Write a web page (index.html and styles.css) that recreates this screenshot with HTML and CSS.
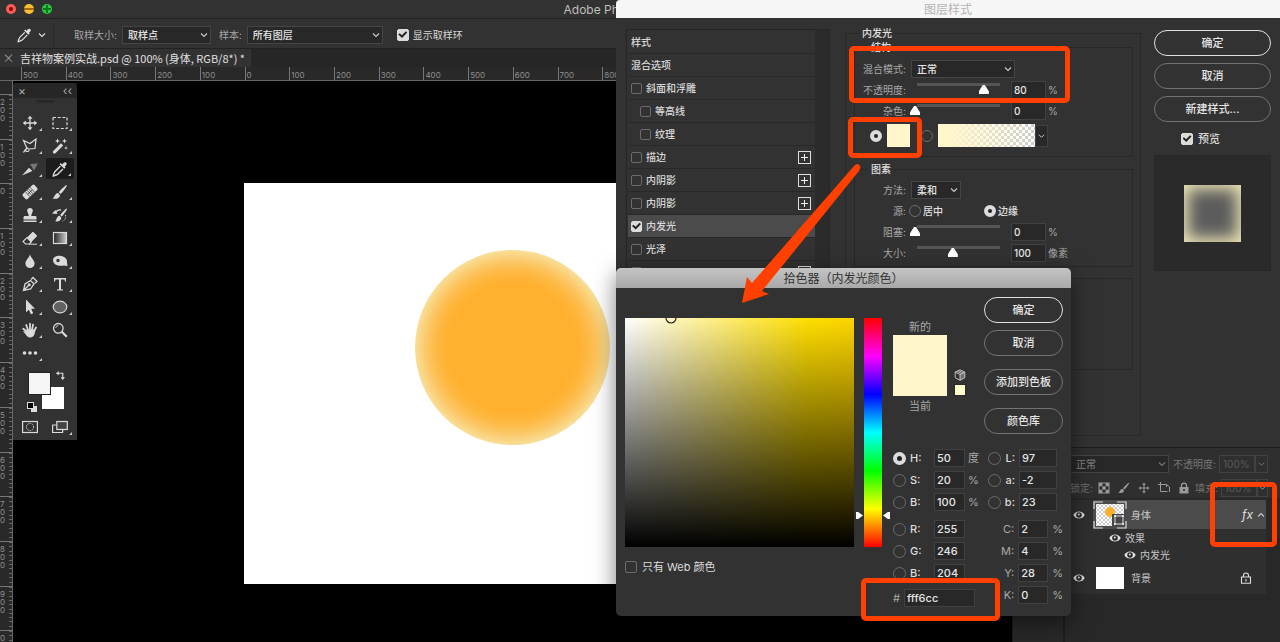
FILE: index.html
```html
<!DOCTYPE html>
<html lang="zh-CN">
<head>
<meta charset="utf-8">
<title>Adobe Photoshop CC 2019</title>
<link rel="stylesheet" href="styles.css">
</head>
<body>
<svg class="defs" aria-hidden="true">
  <symbol id="chev" viewBox="0 0 8 8"><path d="M1 2.500l3 3 3-3" fill="none" stroke="currentColor" stroke-width="1.100"/></symbol>
  <symbol id="dropper" viewBox="0 0 16 16"><path d="M10.2 3.600c1-1.600 2.400-3 3.800-2 1.500 1.200.4 2.800-1.200 4l.8.9-1.300 1.300-4.800-4.600L8.800 2z" fill="currentColor"/><path d="M8.300 5.200L3 10.500c-.8.8-.6 1.600-1.500 3L1.300 15l1.400-.3c1.400-.9 2.100-.6 3-1.500L11 7.900" fill="none" stroke="currentColor" stroke-width="1.400"/></symbol>
  <symbol id="move" viewBox="0 0 16 16"><path d="M8 3v10M3 8h10" stroke="currentColor" stroke-width="1.300"/><path d="M8 .8l2.500 3h-5zM8 15.200l2.500-3h-5zM.8 8l3-2.500v5zM15.200 8l-3-2.500v5z" fill="currentColor"/></symbol>
  <symbol id="marquee" viewBox="0 0 16 16"><rect x="1" y="2.500" width="14" height="11" fill="none" stroke="currentColor" stroke-width="1.200" stroke-dasharray="3 1.700"/></symbol>
  <symbol id="lasso" viewBox="0 0 16 16"><path d="M5 10.500L1.500 2.500l6.500 3 6-4.500-1 9.500-6.500.5M5 10.500a1.800 1.500 0 1 0 2 1.300M5 10.500c-2 1-2.500 2-3.500 4M6.500 11l-2-1.500" fill="none" stroke="currentColor" stroke-width="1.200"/></symbol>
  <symbol id="wand" viewBox="0 0 16 16"><path d="M1 13.300L9 5.300l2.200 2.200-8 8c-1.500.5-2.700-.7-2.200-2.200z" fill="currentColor"/><path d="M5.500.5l.7 1.800 1.800.7-1.800.7-.7 1.800-.7-1.800L3 3l1.800-.7zM12.500.5l.6 1.800 1.900.7-1.900.7-.6 1.800-.7-1.800-1.800-.7 1.800-.7zM14 8l.5 1.500 1.500.5-1.500.5L14 12l-.5-1.500L12 10l1.500-.5z" fill="currentColor"/></symbol>
  <symbol id="slice" viewBox="0 0 16 16"><path d="M8 3l8-.5-4 7z" fill="#777"/><path d="M0 14.500L7 6.800l3.400 3.200z" fill="currentColor"/></symbol>
  <symbol id="heal" viewBox="0 0 16 16"><g transform="rotate(-43 8 8)"><rect x="0" y="4.500" width="16" height="7" rx="1.800" fill="currentColor"/><path d="M4.800 4.500v7M11.200 4.500v7M7 4.500v7M9 4.500v7M4.800 8h6.400" stroke="#333" stroke-width=".7"/></g></symbol>
  <symbol id="brush" viewBox="0 0 16 16"><path d="M14.800 1c.8.7-3.500 6.500-6.300 9L6.700 8.300C9 5.500 14 .4 14.800 1zM6 9l1.900 1.900c.4 3-3.500 4.600-7.400 3.600C2.600 13.600 2.700 9.300 6 9z" fill="currentColor"/></symbol>
  <symbol id="stamp" viewBox="0 0 16 16"><path d="M6.700 9C6.800 6.500 5.200 5.500 5.200 3.700a2.800 2.700 0 0 1 5.600 0c0 1.800-1.600 2.800-1.500 5.300H13c1 0 1.500.6 1.500 1.500v2h-13v-2C1.500 9.600 2 9 3 9zM1.500 13.500h13V15h-13z" fill="currentColor"/></symbol>
  <symbol id="history" viewBox="0 0 16 16"><path d="M14.800 1.500c.8.7-2.500 5.500-5 8L8.200 8c2-2.500 5.900-7.100 6.600-6.500zM7.600 8.700l1.600 1.700c.4 2.800-3 4.500-6.200 3.900 1.800-1.300 1.700-5.300 4.600-5.600z" fill="currentColor"/><path d="M3 6c2-3 4-3.500 6-3" fill="none" stroke="currentColor" stroke-width="1.400"/><path d="M0 6.500L3.500 3 5.500 7z" fill="currentColor"/><path d="M13.500 8c.5 3-.5 5-3 6.500" fill="none" stroke="currentColor" stroke-dasharray="1.200 1.200"/></symbol>
  <symbol id="eraser" viewBox="0 0 16 16"><path d="M5 7.500L10 2.500c.6-.6 1.200-.6 1.800 0L14.500 5c.6.6.6 1.200 0 1.800L9.300 12z" fill="currentColor"/><path d="M5 7.500l4.300 4.500-2 2H3.600L1 11.500z" fill="none" stroke="currentColor" stroke-width="1.100"/><path d="M7 14.200h8" stroke="currentColor"/></symbol>
  <symbol id="gradient" viewBox="0 0 16 16"><defs><linearGradient id="lg"><stop stop-color="#222"/><stop offset="1" stop-color="#ccc"/></linearGradient></defs><rect x="1.500" y="2.500" width="13" height="11" fill="url(#lg)" stroke="currentColor" stroke-width="1.200"/></symbol>
  <symbol id="drop" viewBox="0 0 16 16"><path d="M8 1.500c1 3.500 4.600 5.800 4.600 9a4.600 4.500 0 0 1-9.200 0c0-3.200 3.600-5.500 4.600-9z" fill="currentColor"/></symbol>
  <symbol id="dodge" viewBox="0 0 16 16"><path d="M1 7c.5-4 6.500-5 10-3.500C14 4.500 15.500 7 15 10l.5 3-4-.5C7 13.500 1 12 1 7z" fill="currentColor"/><circle cx="6" cy="7.500" r="1.700" fill="#333"/></symbol>
  <symbol id="pen" viewBox="0 0 16 16"><path d="M1.500 14.500L3 8l5.500-3.500 3.500 3.300L8.600 13zM9 3.500L11 1.500l4 4L12.800 7.300M1.500 14.500L6.500 9.500" fill="none" stroke="currentColor" stroke-width="1.300"/><circle cx="7.200" cy="8.800" r="1.500" fill="currentColor"/></symbol>
  <symbol id="type" viewBox="0 0 16 16"><path d="M2 2h12v3.500h-1l-.5-2H9v9.700l2 .3v1H5v-1l2-.3V3.500H3.500l-.5 2H2z" fill="currentColor"/></symbol>
  <symbol id="select" viewBox="0 0 16 16"><path d="M4 .5l9 9.300H9.200l2 4.500-2.300 1-2-4.600L4 13.300z" fill="currentColor"/></symbol>
  <symbol id="ellipse" viewBox="0 0 16 16"><ellipse cx="8" cy="8" rx="6.800" ry="5.800" fill="#626262" stroke="currentColor" stroke-width="1.200"/></symbol>
  <symbol id="hand" viewBox="0 0 16 16"><path d="M4.800 9.500L1.300 6.700M6 8L4.200 3M8 7.500V1.700M10 8l1-5.300M12 9.300L14 5.500" stroke="currentColor" stroke-width="1.800" stroke-linecap="round"/><path d="M4.500 7.500h8.700c0 4-1.200 8-4.700 8S4.300 13 1 9l3 .5z" fill="currentColor"/></symbol>
  <symbol id="zoom" viewBox="0 0 16 16"><circle cx="6.300" cy="6.300" r="4.800" fill="none" stroke="currentColor" stroke-width="1.300"/><path d="M9.800 9.800l5 5" stroke="currentColor" stroke-width="2.200"/><path d="M3.700 6A2.700 2.700 0 0 1 6.300 3.600" fill="none" stroke="currentColor" stroke-width=".8"/></symbol>
  <symbol id="dots" viewBox="0 0 16 16"><circle cx="2.500" cy="8" r="1.800" fill="currentColor"/><circle cx="8" cy="8" r="1.800" fill="currentColor"/><circle cx="13.500" cy="8" r="1.800" fill="currentColor"/></symbol>
  <symbol id="mask" viewBox="0 0 16 16"><rect x=".6" y="2.500" width="14.800" height="11" fill="none" stroke="currentColor" stroke-width="1.200"/><circle cx="8" cy="8" r="3.600" fill="none" stroke="currentColor" stroke-dasharray="1.300 1"/></symbol>
  <symbol id="screen" viewBox="0 0 16 16"><path d="M4.500 6H.6v7.500h10V11" fill="none" stroke="currentColor" stroke-width="1.200"/><rect x="4.800" y="2.500" width="10.500" height="8" fill="#444" stroke="currentColor" stroke-width="1.200"/></symbol>
  <symbol id="swap" viewBox="0 0 10 10"><path d="M2 2.500h5.500V8" fill="none" stroke="currentColor" stroke-width="1.300"/><path d="M0 2.500L3 0v5zM7.500 10L5 7h5z" fill="currentColor"/></symbol>
  <symbol id="eye" viewBox="0 0 12 12"><path d="M.3 6C2.500 1.300 9.500 1.300 11.700 6 9.500 10.700 2.500 10.700.3 6z" fill="currentColor"/><circle cx="6" cy="6" r="2.800" fill="#2b2b2b"/><circle cx="5.800" cy="5.500" r="1" fill="currentColor"/></symbol>
  <symbol id="lockpx" viewBox="0 0 12 12"><rect x="1" y="1" width="10" height="10" fill="none" stroke="currentColor"/><path d="M1 1h3.300v3.300H1zM7.700 1H11v3.300H7.700zM4.300 4.300h3.400v3.400H4.300zM1 7.700h3.300V11H1zM7.700 7.700H11V11H7.700z" fill="currentColor"/></symbol>
  <symbol id="artb" viewBox="0 0 12 12"><path d="M0 2.500h8.500V5M2.500 0v9.500h7M8.500 2.500l3 2.500v5" fill="none" stroke="currentColor"/></symbol>
  <symbol id="lock" viewBox="0 0 12 12"><path d="M3.500 5.500V3.700a2.500 2.500 0 0 1 5 0v1.800" fill="none" stroke="currentColor" stroke-width="1.300"/><path d="M1.500 5h9v6.500h-9z" fill="currentColor"/><circle cx="6" cy="8" r="1" fill="#2b2b2b"/></symbol>
  <symbol id="lock2" viewBox="0 0 12 12"><path d="M3.500 5V3.500a2.500 2.500 0 0 1 5 0V5M1.500 5h9v6.300h-9zM6 7v2.500" fill="none" stroke="currentColor" stroke-width="1.100"/></symbol>
  <symbol id="cube" viewBox="0 0 12 12"><path d="M6 .8l4.800 2.300v5.600L6 11.300 1.200 8.700V3.100zM1.200 3.100L6 5.500l4.800-2.400M6 5.500v5.800M3 2.500l5 2.300M4.500 1.600l5 2.300" fill="none" stroke="currentColor" stroke-width=".9"/><path d="M6 5.500v5.800l4.800-2.600V3.100z" fill="currentColor" opacity=".4"/></symbol>
</svg>

<div class="desktop">
  <main class="app">
    <header class="titlebar">
      <span class="light red"></span><span class="light amber"></span><span class="light green"></span>
      <span class="app-name">Adobe Photoshop CC 2019</span>
    </header>
    <div class="options">
      <button class="current-tool" aria-label="吸管工具"><svg class="i16"><use href="#dropper"/></svg><svg class="i8"><use href="#chev"/></svg></button>
      <label for="size">取样大小:</label>
      <span class="pick pick-size"><select id="size"><option>取样点</option></select><svg class="i8"><use href="#chev"/></svg></span>
      <label for="sample">样本:</label>
      <span class="pick pick-sample"><select id="sample"><option>所有图层</option></select><svg class="i8"><use href="#chev"/></svg></span>
      <label class="ring"><input type="checkbox" checked>显示取样环</label>
    </div>
    <div class="tabs"><div class="tab"><button class="tab-close" aria-label="关闭">×</button><span>吉祥物案例实战.psd @ 100% (身体, RGB/8*) *</span></div></div>
    <div class="hruler"><div class="hscale"><span>500</span><span>400</span><span>300</span><span>200</span><span>100</span><span>0</span><span>100</span><span>200</span><span>300</span><span>400</span><span>500</span><span>600</span><span>700</span><span>800</span></div></div>
    <div class="work">
      <div class="vruler"><div class="vscale"><span>200</span><span>100</span><span>0</span><span>100</span><span>200</span><span>300</span><span>400</span><span>500</span><span>600</span><span>700</span><span>800</span><span>900</span><span>0</span></div></div>
      <div class="canvas"><div class="artboard"><div class="ball"></div></div></div>
      <div class="dock"></div>
    </div>
  </main>

  <aside class="tools">
    <div class="tools-head"><button aria-label="关闭">×</button><button aria-label="折叠">‹‹</button></div>
    <div class="grip"></div>
    <div class="tool-grid">
      <button aria-label="移动"><svg class="i16"><use href="#move"/></svg></button>
      <button aria-label="选框"><svg class="i16"><use href="#marquee"/></svg></button>
      <button aria-label="套索"><svg class="i16"><use href="#lasso"/></svg></button>
      <button aria-label="魔棒"><svg class="i16"><use href="#wand"/></svg></button>
      <button aria-label="切片"><svg class="i16"><use href="#slice"/></svg></button>
      <button aria-label="吸管" class="on"><svg class="i16"><use href="#dropper"/></svg></button>
      <button aria-label="修复"><svg class="i16"><use href="#heal"/></svg></button>
      <button aria-label="画笔"><svg class="i16"><use href="#brush"/></svg></button>
      <button aria-label="图章"><svg class="i16"><use href="#stamp"/></svg></button>
      <button aria-label="历史画笔"><svg class="i16"><use href="#history"/></svg></button>
      <button aria-label="橡皮擦"><svg class="i16"><use href="#eraser"/></svg></button>
      <button aria-label="渐变"><svg class="i16"><use href="#gradient"/></svg></button>
      <button aria-label="模糊"><svg class="i16"><use href="#drop"/></svg></button>
      <button aria-label="减淡"><svg class="i16"><use href="#dodge"/></svg></button>
      <button aria-label="钢笔"><svg class="i16"><use href="#pen"/></svg></button>
      <button aria-label="文字"><svg class="i16"><use href="#type"/></svg></button>
      <button aria-label="路径选择"><svg class="i16"><use href="#select"/></svg></button>
      <button aria-label="椭圆"><svg class="i16"><use href="#ellipse"/></svg></button>
      <button aria-label="抓手"><svg class="i16"><use href="#hand"/></svg></button>
      <button aria-label="缩放" class="plain"><svg class="i16"><use href="#zoom"/></svg></button>
      <button aria-label="更多"><svg class="i16"><use href="#dots"/></svg></button>
    </div>
    <div class="colors">
      <span class="back"></span><span class="fore"></span>
      <span class="mini-back"></span><span class="mini-fore"></span>
      <svg class="swap"><use href="#swap"/></svg>
    </div>
    <div class="tool-grid">
      <button aria-label="快速蒙版" class="plain"><svg class="i16"><use href="#mask"/></svg></button>
      <button aria-label="屏幕模式"><svg class="i16"><use href="#screen"/></svg></button>
    </div>
  </aside>

  <section class="layers">
    <div class="layers-bar">
      <span class="pick"><select aria-label="混合模式" disabled><option>正常</option></select><svg class="i8"><use href="#chev"/></svg></span>
      <label for="lop">不透明度:</label><input id="lop" value="100%" disabled><span class="step"><svg class="i8"><use href="#chev"/></svg></span>
    </div>
    <div class="layers-bar locks">
      <span class="lock-label">锁定:</span>
      <svg class="i12"><use href="#lockpx"/></svg><svg class="i12"><use href="#brush"/></svg><svg class="i12"><use href="#move"/></svg><svg class="i12"><use href="#artb"/></svg><svg class="i12"><use href="#lock"/></svg>
      <label for="fill">填充:</label><input id="fill" value="100%" disabled><span class="step"><svg class="i8"><use href="#chev"/></svg></span>
    </div>
    <div class="layer-list">
      <div class="layer chosen"><span class="vis"><svg class="i12"><use href="#eye"/></svg></span>
        <svg class="thumb" viewBox="0 0 34 28"><defs><pattern id="ck" width="4" height="4" patternUnits="userSpaceOnUse"><path d="M0 0h4v4H0z" fill="#fff"/><path d="M0 0h2v2H0zM2 2h2v2H2z" fill="#ccc"/></pattern></defs><rect x="3" y="3" width="28" height="22" fill="url(#ck)"/><circle cx="17" cy="11" r="5" fill="#fbb02e"/><path d="M1 8V1h9M24 1h9v7M33 20v7h-9M10 27H1v-7" fill="none" stroke="#ddd" stroke-width="1.200"/><rect x="19" y="13" width="13" height="12" fill="#454545"/><rect x="22" y="15" width="8" height="8" fill="none" stroke="#ddd"/><path d="M21 14h2v2h-2zM29 14h2v2h-2zM21 22h2v2h-2zM29 22h2v2h-2z" fill="#ddd"/></svg>
        <span class="layer-name">身体</span><span class="fx">fx</span><svg class="i8 up"><use href="#chev"/></svg></div>
      <div class="effect"><svg class="i12"><use href="#eye"/></svg>效果</div>
      <div class="effect deep"><svg class="i12"><use href="#eye"/></svg>内发光</div>
      <div class="layer"><span class="vis"><svg class="i12"><use href="#eye"/></svg></span><span class="thumb"><i class="paper"></i></span><span class="layer-name">背景</span><svg class="i12 locked"><use href="#lock2"/></svg></div>
    </div>
  </section>

  <section class="style-dialog" aria-label="图层样式">
    <h1>图层样式</h1>
    <div class="style-body">
      <ul class="effects">
        <li>样式</li>
        <li>混合选项</li>
        <li><label><input type="checkbox">斜面和浮雕</label></li>
        <li class="sub"><label><input type="checkbox">等高线</label></li>
        <li class="sub"><label><input type="checkbox">纹理</label></li>
        <li><label><input type="checkbox">描边</label><button class="plus" aria-label="添加"></button></li>
        <li><label><input type="checkbox">内阴影</label><button class="plus" aria-label="添加"></button></li>
        <li><label><input type="checkbox">内阴影</label><button class="plus" aria-label="添加"></button></li>
        <li class="active"><label><input type="checkbox" checked>内发光</label></li>
        <li><label><input type="checkbox">光泽</label></li>
        <li><label><input type="checkbox" aria-label="叠加"></label><button class="plus" aria-label="添加"></button></li>
      </ul>
      <fieldset class="glow">
        <legend>内发光</legend>
        <fieldset class="group structure">
          <legend>结构</legend>
          <div class="row"><label for="mode">混合模式:</label><span class="pick pick-mode"><select id="mode"><option>正常</option></select><svg class="i8"><use href="#chev"/></svg></span></div>
          <div class="row"><label for="op">不透明度:</label><input type="range" value="80" aria-label="不透明度滑块"><input class="num" id="op" value="80"><span>%</span></div>
          <div class="row"><label for="noise">杂色:</label><input type="range" value="0" aria-label="杂色滑块"><input class="num" id="noise" value="0"><span>%</span></div>
          <div class="fills"><input type="radio" name="fill" checked aria-label="纯色"><button class="solid" aria-label="发光颜色"></button><input type="radio" name="fill" aria-label="渐变"><span class="ramp"></span><button class="step" aria-label="选择渐变"><svg class="i8"><use href="#chev"/></svg></button></div>
        </fieldset>
        <fieldset class="group elements">
          <legend>图素</legend>
          <div class="row"><label for="tech">方法:</label><span class="pick pick-tech"><select id="tech"><option>柔和</option></select><svg class="i8"><use href="#chev"/></svg></span></div>
          <div class="row"><span class="lab">源:</span><span class="sources"><label><input type="radio" name="src">居中</label><label><input type="radio" name="src" checked>边缘</label></span></div>
          <div class="row"><label for="choke">阻塞:</label><input type="range" value="0" aria-label="阻塞滑块"><input class="num" id="choke" value="0"><span>%</span></div>
          <div class="row"><label for="gsize">大小:</label><input type="range" value="44" aria-label="大小滑块"><input class="num" id="gsize" value="100"><span>像素</span></div>
        </fieldset>
        <div class="group quality"></div>
      </fieldset>
      <div class="side">
        <button class="pill main">确定</button>
        <button class="pill">取消</button>
        <button class="pill">新建样式...</button>
        <label class="preview-check"><input type="checkbox" checked>预览</label>
        <div class="preview"><div class="preview-chip"></div></div>
      </div>
    </div>
  </section>

  <section class="picker" aria-label="拾色器">
    <h2>拾色器（内发光颜色）</h2>
    <div class="picker-body">
      <div class="field-col">
        <div class="field"><svg class="ring-mark" viewBox="0 0 12 6"><path d="M1 0a5 5 0 0 0 10 0" fill="none" stroke="#222" stroke-width="1.200"/></svg></div>
        <label class="web"><input type="checkbox">只有 Web 颜色</label>
      </div>
      <div class="hue"><i class="hl"></i><i class="hr"></i></div>
      <div class="picker-side">
        <div class="picker-top">
          <div class="compare"><span>新的</span><div class="compare-chip"></div><span>当前</span></div>
          <div class="websafe"><svg class="i12"><use href="#cube"/></svg><i class="safe-chip"></i></div>
          <div class="picker-buttons">
            <button class="pill main">确定</button>
            <button class="pill">取消</button>
            <button class="pill far">添加到色板</button>
            <button class="pill far">颜色库</button>
          </div>
        </div>
        <div class="values">
          <div class="col">
            <div class="val"><input type="radio" name="ch" id="rh" checked><label for="rh">H:</label><input class="num" value="50" aria-label="H"><span>度</span></div>
            <div class="val"><input type="radio" name="ch" id="rs"><label for="rs">S:</label><input class="num" value="20" aria-label="S"><span>%</span></div>
            <div class="val"><input type="radio" name="ch" id="rb"><label for="rb">B:</label><input class="num" value="100" aria-label="B"><span>%</span></div>
            <div class="val gap"><input type="radio" name="ch" id="rr"><label for="rr">R:</label><input class="num" value="255" aria-label="R"></div>
            <div class="val"><input type="radio" name="ch" id="rg"><label for="rg">G:</label><input class="num" value="246" aria-label="G"></div>
            <div class="val"><input type="radio" name="ch" id="rbl"><label for="rbl">B:</label><input class="num" value="204" aria-label="B"></div>
            <div class="hex"><label for="hex">#</label><input class="num" id="hex" value="fff6cc"></div>
          </div>
          <div class="col right">
            <div class="val lab-row"><input type="radio" name="ch" id="rl"><label for="rl">L:</label><input class="num" value="97" aria-label="L"></div>
            <div class="val lab-row"><input type="radio" name="ch" id="ra"><label for="ra">a:</label><input class="num" value="-2" aria-label="a"></div>
            <div class="val lab-row"><input type="radio" name="ch" id="rb2"><label for="rb2">b:</label><input class="num" value="23" aria-label="b"></div>
            <div class="val gap cmyk"><label for="c">C:</label><input class="num" id="c" value="2"><span>%</span></div>
            <div class="val cmyk"><label for="m">M:</label><input class="num" id="m" value="4"><span>%</span></div>
            <div class="val cmyk"><label for="y">Y:</label><input class="num" id="y" value="28"><span>%</span></div>
            <div class="val cmyk"><label for="k">K:</label><input class="num" id="k" value="0"><span>%</span></div>
          </div>
        </div>
      </div>
    </div>
  </section>

  <div class="mark mark-mode"></div>
  <div class="mark mark-color"></div>
  <div class="mark mark-hex"></div>
  <div class="mark mark-fx"></div>
  <svg class="arrow" viewBox="0 0 130 150"><path d="M4 143L9 117l5 6L116 6q4-4 6 0 1 2-1 5L24 131l7 3z" fill="#ff4000"/></svg>
</div>
</body>
</html>
```
FILE: styles.css
```css
* { box-sizing: border-box; }

body {
  margin: 0;
  background: #000;
  color: #d8d8d8;
  font: 10px/12px Inter, "Noto Sans CJK SC", sans-serif;
}

button, input, select { font: inherit; color: inherit; margin: 0; padding: 0; border: 0; background: none; }
button { display: inline-flex; align-items: center; justify-content: center; }
label { white-space: nowrap; }
svg { display: block; flex: none; }
.defs { position: absolute; width: 0; height: 0; }
.i8 { width: 8px; height: 8px; }
.i12 { width: 12px; height: 12px; }
.i16 { width: 16px; height: 16px; }

.desktop { position: relative; min-height: 100vh; overflow: hidden; }

/* form controls */
input[type="checkbox"] {
  appearance: none;
  flex: none;
  display: grid;
  place-items: center;
  width: 11px;
  height: 11px;
  border: 1px solid #6c6c6c;
  border-radius: 2px;
}
input[type="checkbox"]:checked { background: #dcdcdc; border-color: #dcdcdc; }
input[type="checkbox"]:checked::before {
  content: "";
  width: 9px;
  height: 8px;
  background: #222;
  clip-path: polygon(0 50%, 16% 34%, 40% 60%, 84% 8%, 100% 24%, 42% 94%);
}
input[type="radio"] {
  appearance: none;
  flex: none;
  width: 12px;
  height: 12px;
  border: 1px solid #6c6c6c;
  border-radius: 50%;
}
input[type="radio"]:checked { border: 4px solid #dcdcdc; background: #222; }
input[type="range"] { appearance: none; width: 96px; height: 13px; }
input[type="range"]::-webkit-slider-runnable-track {
  height: 13px;
  background: linear-gradient(#555, #555) 7px 0 / 83px 3px no-repeat;
}
input[type="range"]::-webkit-slider-thumb {
  appearance: none;
  width: 10px;
  height: 9px;
  margin-top: 2px;
  background: #fff;
  clip-path: polygon(40% 0, 60% 0, 100% 70%, 100% 100%, 0 100%, 0 70%);
}
.num { height: 18px; padding-left: 2px; background: #282828; border: 1px solid #414141; color: #e4e4e4; font-weight: 500; }

.pick { position: relative; display: block; height: 18px; }
.pick select { appearance: none; width: 100%; height: 100%; padding: 0 5px; background: #282828; border: 1px solid #454545; color: #e4e4e4; font-weight: 500; opacity: 1; }
.pick svg { position: absolute; right: 3px; top: 5px; color: #ccc; }

.pill { height: 26px; border: 1px solid #737373; border-radius: 13px; color: #e4e4e4; font-size: 11px; font-weight: 500; }
.pill.main { border-color: #e0e0e0; }

/* application window */
.app { display: flex; flex-direction: column; height: 100vh; background: #262626; }
.titlebar { position: relative; display: flex; align-items: center; gap: 8px; height: 19px; padding: 0 6px; background: #323232; border-bottom: 1px solid #222; }
.light { width: 10px; height: 10px; border-radius: 50%; }
.red { background: #7c0b08; border: 3px solid #fc5b56; }
.amber { background: linear-gradient(transparent 4px, #a46a0a 4px 6px, transparent 6px) #fdbc32; }
.green { background: linear-gradient(transparent 4px, #0b7a1c 4px 6px, transparent 6px) center / 8px 10px no-repeat, linear-gradient(90deg, transparent 4px, #0b7a1c 4px 6px, transparent 6px) center / 10px 8px no-repeat #2ac840; }
.app-name { position: absolute; inset: 0; text-align: center; font-size: 12px; line-height: 19px; color: #bdbdbd; }
.options { display: flex; align-items: center; height: 29px; padding: 2px 0 0 17px; background: #323232; color: #a8a8a8; }
.current-tool { gap: 6px; width: 37px; padding-right: 8px; height: 24px; border-right: 1px solid #292929; margin-right: 20px; color: #e0e0e0; justify-content: flex-start; }
.current-tool .i16 { width: 15px; }
.pick-size { width: 89px; margin: 0 8px 0 5px; }
.pick-sample { width: 136px; margin: 0 14px 0 5px; }
.ring { display: flex; align-items: center; gap: 4px; color: #d8d8d8; }
.tabs { display: flex; height: 19px; border-top: 1px solid #222; }
.tab { display: flex; align-items: center; gap: 8px; padding: 0 6px 0 5px; background: #323232; color: #e0e0e0; font: 11px/18px "Noto Sans CJK SC", sans-serif; white-space: nowrap; }
.tab-close { width: 7px; color: #999; font-size: 12px; }

.hruler { height: 14px; padding-left: 21px; overflow: hidden; background: #292929; border-bottom: 1px solid #666; }
.hscale { display: grid; grid-template-columns: repeat(14, 1fr); width: 626px; height: 13px; }
.hscale span { padding-left: 1px; border-left: 1px solid #777; color: #8e8e8e; font-size: 8px; line-height: 16px; background: repeating-linear-gradient(90deg, #666 0 1px, transparent 1px 10%) 0 100% / 100% 3px no-repeat; }
.work { display: flex; flex: 1; min-height: 0; }
.vruler { width: 13px; padding-top: 13px; overflow: hidden; background: #292929; border-right: 1px solid #666; }
.vscale { display: grid; grid-template-rows: repeat(13, 1fr); height: 581px; }
.vscale span { padding: 3px 6px 0 0; border-top: 1px solid #777; color: #8e8e8e; font-size: 8px; line-height: 8px; width: 12px; word-break: break-all; background: repeating-linear-gradient(#666 0 1px, transparent 1px 10%) 100% 0 / 3px 100% no-repeat; }
.canvas { position: relative; flex: 1; background: #000; }
.artboard { position: absolute; left: 231px; top: 102px; display: grid; place-items: center; width: 536px; height: 401px; padding-bottom: 72px; background: #fff; }
.ball { width: 195px; height: 195px; border-radius: 50%; background: radial-gradient(circle closest-side, #ffb02f 66%, #feb840 77%, #fcc561 87%, #f9d788 96%, #f8df9a 100%); }
.dock { width: 268px; background: #282828; border-left: 1px solid #1c1c1c; }

/* tool palette */
.tools { position: absolute; left: 13px; top: 83px; width: 64px; padding-bottom: 2px; background: #323232; border-radius: 3px 3px 0 0; overflow: hidden; color: #dadada; }
.tools-head { display: flex; justify-content: space-between; height: 15px; padding: 0 5px; background: #262626; color: #aaa; font-size: 12px; }
.grip { width: 18px; height: 3px; margin: 2px auto 8px; background: #292929; }
.tool-grid { display: grid; grid-template-columns: 30px 30px; grid-auto-rows: 23px; justify-content: center; }
.tool-grid button { position: relative; }
.tool-grid button.on { background: #1c1c1c; border: 1px solid #323232; border-radius: 3px; }
.tool-grid button:not(.plain)::after { content: ""; position: absolute; right: 3px; bottom: 3px; width: 3px; height: 3px; background: #ccc; clip-path: polygon(100% 0, 100% 100%, 0 100%); }
.colors { position: relative; height: 51px; }
.fore, .back, .mini-fore, .mini-back { position: absolute; }
.fore { left: 15px; top: 8px; width: 23px; height: 23px; background: #f5f5f5; border: 1px solid #222; }
.back { left: 29px; top: 23px; width: 22px; height: 22px; background: #fff; }
.mini-fore { left: 14px; top: 38px; width: 7px; height: 7px; background: #000; border: 1px solid #ddd; }
.mini-back { left: 18px; top: 42px; width: 6px; height: 6px; background: #ddd; }
.swap { position: absolute; left: 43px; top: 7px; width: 9px; height: 9px; }

/* layers panel */
.layers { position: absolute; right: 0; top: 446px; bottom: 0; width: 217px; padding-top: 7px; background: #282828; border-top: 2px solid #1d1d1d; border-left: 2px solid #1d1d1d; color: #777; }
.layers::before { content: ""; position: absolute; inset: 0 0 auto; height: 50px; background: #2f2f2f; }
.layers-bar { position: relative; display: flex; align-items: center; height: 18px; padding: 0 12px 0 5px; }
.layers-bar .pick { flex: 1; margin-right: 4px; }
.layers-bar .pick select, .layers-bar .pick svg, .layers-bar .step { color: #777; }
.layers-bar input { width: 36px; height: 18px; padding-left: 3px; margin-left: 3px; border: 1px solid #414141; color: #5a5a5a; }
.layers-bar .step { background: none; }
.locks { gap: 8px; margin-top: 6px; color: #707070; }
.lock-label { flex: none; margin-right: -3px; white-space: nowrap; }
.locks svg { color: #999; }
.locks label { margin-left: -3px; }
.locks .step { margin-left: -8px; }
.locks input { margin-left: -5px; }
.layer-list { position: relative; margin: 3px 14px 0 0; padding-bottom: 1px; background: #2f2f2f; color: #c8c8c8; }
.layer { display: flex; align-items: center; height: 30px; padding-right: 14px; }
.chosen { height: 29px; background: linear-gradient(90deg, #2f2f2f 28px, #4b4b4b 28px); padding-right: 1px; }
.vis { display: grid; place-items: center; width: 28px; align-self: stretch; color: #ddd; }
.thumb { display: grid; place-items: center; width: 34px; height: 28px; }
.paper { width: 28px; height: 22px; background: #fff; }
.layer-name { flex: 1; margin-left: 4px; }
.fx { margin-right: 4px; font-size: 12px; font-style: italic; color: #e0e0e0; }
.up { transform: rotate(180deg); }
.locked { color: #ddd; }
.effect { display: flex; align-items: center; gap: 4px; height: 17px; padding-left: 44px; }
.effect.deep { padding-left: 59px; }
.effect svg { color: #e4e4e4; }

.step { display: grid; place-items: center; width: 13px; height: 18px; background: #282828; border: 1px solid #414141; color: #ccc; }
.step svg { width: 7px; }

/* layer style dialog */
.style-dialog { position: absolute; left: 616px; right: 0; top: 0; height: 447px; overflow: hidden; background: #323232; }
h1, h2 { margin: 0; font-size: 12px; font-weight: 400; text-align: center; }
h1 { height: 18px; line-height: 19px; background: #f6f6f6; color: #b4b4b4; border-radius: 4px 0 0; }
.style-body { display: flex; padding: 9px 9px 10px 10px; }
.effects { flex: none; width: 204px; height: 400px; margin: 2px 15px 0 0; padding: 1px 14px 0 1px; list-style: none; overflow: hidden; border: 1px solid #262626; background: linear-gradient(#2b2b2b, #2b2b2b) 100% 0 / 14px 100% no-repeat; }
.effects li { display: flex; align-items: center; justify-content: space-between; height: 23px; padding: 0 4px 0 3px; border-bottom: 1px solid #282828; font-weight: 500; }
.effects label { display: flex; align-items: center; gap: 4px; }
.effects .sub { padding-left: 12px; }
.effects .active { background: #4b4b4b; }
.plus { width: 13px; height: 13px; border: 1px solid #ddd; background: linear-gradient(#eee, #eee) center / 7px 1px no-repeat, linear-gradient(#eee, #eee) center / 1px 7px no-repeat; }

fieldset { min-width: 0; margin: 0; border: 1px solid #282828; }
legend { padding: 0 3px; font-weight: 500; line-height: 12px; color: #e0e0e0; }
.glow { flex: 1; height: 409px; padding: 2px 7px 0 8px; }
.glow > legend { margin-left: 5px; }
.group { border: 1px solid #282828; }
.group > legend { margin-left: 13px; }
.structure { padding: 5px 0 6px; }
.elements { margin-top: 6px; padding: 4px 0 3px; }
.row { display: flex; align-items: center; height: 21px; color: #a8a8a8; }
.row > label, .row > .lab { width: 51px; margin-right: 5px; text-align: right; }
.row > input[type="range"] { margin-left: -1px; margin-right: 5px; }
.row .num { width: 35px; margin-right: 2px; }
.pick-mode { width: 104px; }
.pick-tech { width: 50px; }
.sources { display: flex; gap: 41px; margin-left: -2px; color: #e0e0e0; font-weight: 500; }
.sources label { display: flex; align-items: center; gap: 2px; }
.fills { display: flex; align-items: center; height: 29px; padding-left: 15px; }
.solid { width: 23px; height: 23px; margin: 0 11px 0 5px; background: #fff6cc; }
.ramp { width: 97px; height: 23px; margin-left: 5px; background: linear-gradient(90deg, #fff6cc 10%, transparent), repeating-conic-gradient(#ccc 0 25%, #fff 0 50%) 0 0 / 6px 6px; }
.fills .step { height: 22px; }
.quality { height: 92px; margin-top: 11px; }
.side { flex: none; display: flex; flex-direction: column; gap: 7px; width: 117px; margin-left: 13px; padding-top: 3px; }
.preview-check { display: flex; align-items: center; justify-content: center; gap: 5px; height: 19px; font-size: 11px; font-weight: 500; padding-right: 24px; }
.preview-check input, .ring input { width: 12px; height: 12px; }
.preview { display: grid; place-items: center; height: 116px; background: #2a2a2a; border: 1px solid #282828; }
.preview-chip { width: 57px; height: 57px; background: #5c5c5c; box-shadow: inset 0 0 16px 4px #f0e8b8; }

/* colour picker */
.picker { position: absolute; left: 616px; top: 268px; width: 455px; height: 348px; overflow: hidden; background: #323232; border-radius: 5px; box-shadow: 0 6px 22px rgba(0, 0, 0, .5); color: #a8a8a8; font-size: 11px; }
h2 { height: 20px; line-height: 22px; background: linear-gradient(#c4c4c4, #a9a9a9); color: #333; font-size: 12px; }
.picker-body { display: flex; padding: 9px 8px 9px 9px; }
.field-col { flex: none; width: 229px; padding-top: 21px; }
.field { height: 229px; background: linear-gradient(transparent, #000), linear-gradient(90deg, #fff, #ffde00 80%, #ffd500); }
.ring-mark { width: 12px; height: 6px; margin-left: 40px; }
.web { display: flex; align-items: center; gap: 5px; margin-top: 14px; color: #dcdcdc; }
.web input { width: 12px; height: 12px; }
.hue { position: relative; flex: none; width: 18px; height: 229px; margin: 21px 11px 0 10px; background: linear-gradient(#f00, #f0f, #00f, #0ff, #0f0, #ff0, #f00); }
.hl, .hr { position: absolute; top: 194px; width: 7px; height: 7px; background: #fff; }
.hl { left: -8px; clip-path: polygon(0 0, 30% 0, 100% 50%, 30% 100%, 0 100%); }
.hr { right: -8px; clip-path: polygon(100% 0, 70% 0, 0 50%, 70% 100%, 100% 100%); }
.picker-side { flex: 1; }
.picker-top { display: flex; height: 150px; }
.compare { display: flex; flex-direction: column; align-items: center; gap: 2px; padding-top: 24px; line-height: 12px; }
.compare span:last-child { padding-top: 2px; }
.compare-chip { width: 54px; height: 61px; background: #fff6cc; }
.websafe { display: grid; gap: 3px; align-content: start; margin-left: 7px; padding-top: 72px; color: #ccc; }
.safe-chip { width: 12px; height: 12px; background: #ffffcc; border: 1px solid #262626; }
.picker-buttons { display: flex; flex-direction: column; gap: 7px; width: 79px; margin-left: auto; }
.picker-buttons .far { margin-top: 6px; }
.picker .pill { flex: none; }
.values { display: flex; justify-content: space-between; }
.col { width: 92px; }
.col.right { width: 75px; }
.val { display: flex; align-items: center; height: 22px; }
.val.gap { margin-top: 5px; }
.val input[type="radio"] { width: 13px; height: 13px; }
.val label { width: 24px; padding-left: 4px; color: #dcdcdc; font-weight: 500; }
.val .num { width: 31px; margin-right: 3px; margin-left: 4px; }
.right .val label { width: 14px; padding: 0; text-align: right; }
.right .val .num { width: 38px; margin-right: 0; }
.right .cmyk label { width: 27px; color: #a8a8a8; font-weight: 400; }
.right .cmyk .num { width: 30px; margin-right: 4px; }
.hex { display: flex; align-items: center; gap: 4px; height: 27px; }
.hex .num { width: 71px; flex: none; }

/* callouts */
.mark { position: absolute; border: 5px solid #ff4000; border-radius: 5px; }
.mark-mode { left: 849px; top: 46px; width: 221px; height: 57px; }
.mark-color { left: 848px; top: 117px; width: 74px; height: 41px; }
.mark-hex { left: 861px; top: 578px; width: 139px; height: 43px; }
.mark-fx { left: 1210px; top: 482px; width: 67px; height: 65px; }
.arrow { position: absolute; left: 738px; top: 160px; width: 130px; height: 150px; }
```
